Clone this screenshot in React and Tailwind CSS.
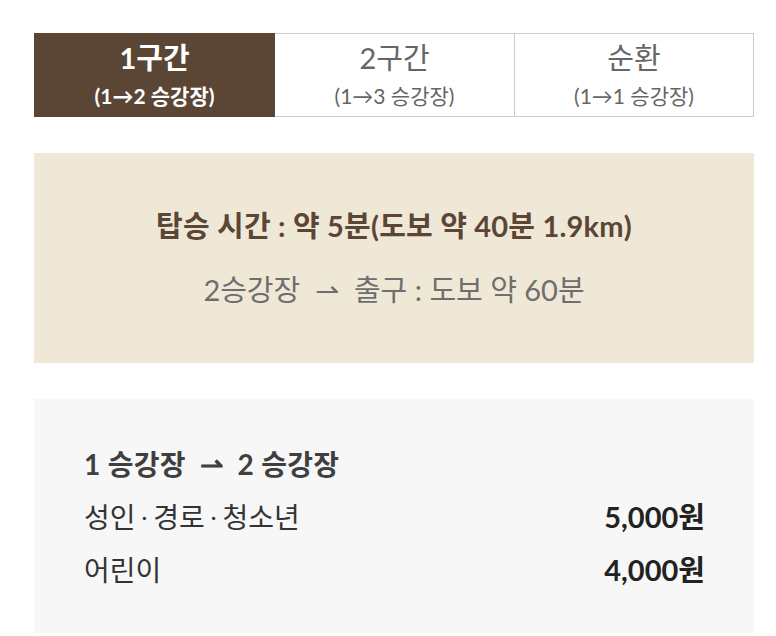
export default function App() {
  const font = { fontFamily: "Lato, 'Noto Sans CJK KR', sans-serif" };
  const Dot = () => <span className="mx-[6px] text-[22px] leading-none align-[3px]">·</span>;
  return (
    <div className="bg-white w-[776px] h-[636px] overflow-hidden" style={font}>
      <div className="ml-[34px] pt-[33px] w-[720px]">
        <div className="grid grid-cols-[241px_240px_239px] h-[84px]">
          <div className="bg-[#5b4636] flex flex-col items-center justify-center text-white">
            <div className="text-[29px] font-bold leading-[34px]">1구간</div>
            <div className="text-[21px] font-bold leading-[26px] mt-[8px]">(1→2 승강장)</div>
          </div>
          <div className="flex flex-col items-center justify-center text-[#666666] border-y border-r border-[#cccccc]">
            <div className="text-[29px] leading-[34px]">2구간</div>
            <div className="text-[21px] leading-[26px] mt-[8px]">(1→3 승강장)</div>
          </div>
          <div className="flex flex-col items-center justify-center text-[#666666] border-y border-r border-[#cccccc]">
            <div className="text-[29px] leading-[34px]">순환</div>
            <div className="text-[21px] leading-[26px] mt-[8px]">(1→1 승강장)</div>
          </div>
        </div>

        <div className="mt-[36px] h-[210px] bg-[#f0e8d6] flex flex-col items-center pt-[55px]">
          <div className="text-[29px] font-bold text-[#5b4636] leading-[36px] tracking-[0.2px]">탑승 시간 : 약 5분(도보 약 40분 1.9km)</div>
          <div className="text-[29px] text-[#6e6e6e] leading-[36px] mt-[28px]">2승강장 &nbsp;⇀&nbsp; 출구 : 도보 약 60분</div>
        </div>

        <div className="mt-[36px] h-[234px] bg-[#f7f7f7] pr-[49px] pl-[50px] pt-[47px]">
          <div className="text-[28px] font-bold text-[#3f3f3f] leading-[36px] tracking-[0.3px]">1 승강장 &nbsp;⇀&nbsp; 2 승강장</div>
          <div className="flex justify-between items-center mt-[17px] h-[36px]">
            <span className="text-[28px] leading-[36px] text-[#333333]">성인<Dot />경로<Dot />청소년</span>
            <span className="text-[29px] leading-[36px] font-bold text-[#222222]">5,000원</span>
          </div>
          <div className="flex justify-between items-center mt-[17px] h-[36px]">
            <span className="text-[28px] leading-[36px] text-[#333333]">어린이</span>
            <span className="text-[29px] leading-[36px] font-bold text-[#222222]">4,000원</span>
          </div>
        </div>
      </div>
    </div>
  );
}
